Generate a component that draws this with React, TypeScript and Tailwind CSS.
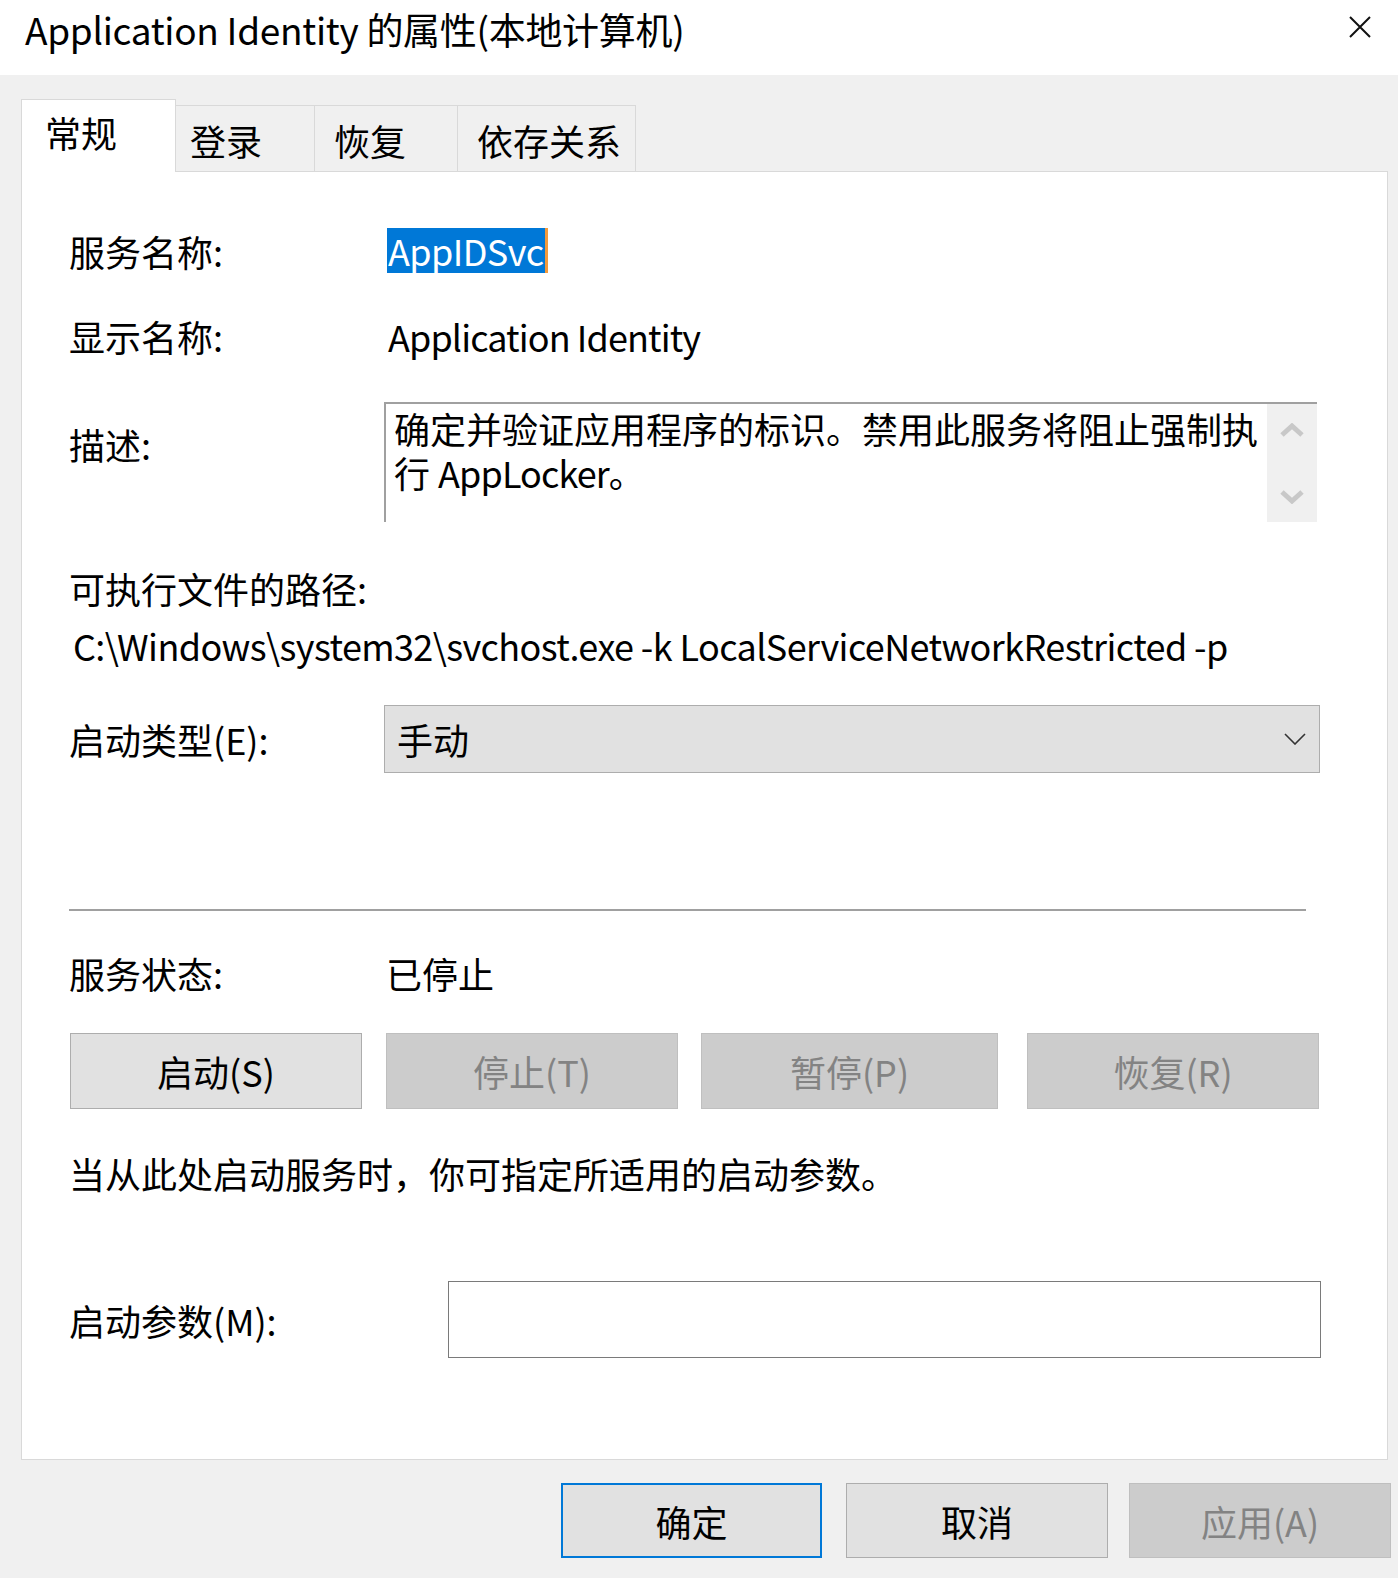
import React from "react";

const font = {
  fontFamily: '"Noto Sans CJK SC", "Noto Sans", sans-serif',
};

type Tab = { label: string; width: string; pad: string; active?: boolean };

const tabs: Tab[] = [
  { label: "常规", width: "w-[155px]", pad: "pl-[23px]", active: true },
  { label: "登录", width: "w-[139px]", pad: "pl-[14px]" },
  { label: "恢复", width: "w-[143px]", pad: "pl-[19px]" },
  { label: "依存关系", width: "w-[178px]", pad: "pl-[19px]" },
];

function CloseIcon() {
  return (
    <svg width="22" height="22" viewBox="0 0 22 22" className="block">
      <path d="M1 1 L21 21 M21 1 L1 21" stroke="#111" strokeWidth="2" fill="none" />
    </svg>
  );
}

function Chevron({ up }: { up?: boolean }) {
  return (
    <svg width="24" height="14" viewBox="0 0 24 14" className="block">
      <path
        d={up ? "M2 12 L12 3 L22 12" : "M2 2 L12 11 L22 2"}
        stroke="#c8c8c8"
        strokeWidth="5"
        fill="none"
      />
    </svg>
  );
}

function DropArrow() {
  return (
    <svg width="22" height="12" viewBox="0 0 22 12" className="block">
      <path d="M1 1 L11 11 L21 1" stroke="#333" strokeWidth="1.6" fill="none" />
    </svg>
  );
}

function Label({ children }: { children: React.ReactNode }) {
  return <div className="w-[315px] shrink-0 leading-[44px]">{children}</div>;
}

export default function App() {
  return (
    <div
      className="w-[1398px] h-[1578px] bg-[#f0f0f0] text-black overflow-hidden"
      style={font}
    >
      {/* title bar */}
      <div className="h-[75px] bg-white flex items-start justify-between pl-[25px] pr-[27px]">
        <div className="pt-[7px] text-[37px] leading-[44px] tracking-[-0.3px] whitespace-nowrap">
          Application Identity 的属性(本地计算机)
        </div>
        <div className="pt-[16px]">
          <CloseIcon />
        </div>
      </div>

      <div className="pl-[21px] pt-[24px]">
        {/* tabs */}
        <div className="flex items-end h-[72px]">
          {tabs.map((tab) =>
            tab.active ? (
              <div
                key={tab.label}
                className={`${tab.width} ${tab.pad} h-[73px] -mb-px relative z-10 bg-white border border-b-0 border-[#d9d9d9] text-[36px] leading-[44px] pt-[10px]`}
              >
                {tab.label}
              </div>
            ) : (
              <div
                key={tab.label}
                className={`${tab.width} ${tab.pad} h-[66px] border-t border-r border-[#d9d9d9] text-[36px] leading-[44px] pt-[12px]`}
              >
                {tab.label}
              </div>
            )
          )}
        </div>

        {/* panel */}
        <div className="w-[1367px] h-[1289px] bg-white border border-[#d9d9d9] pl-[47px] pt-[56px] text-[36px]">
          <div className="flex h-[45px] items-center">
            <Label>服务名称:</Label>
            <div className="flex h-[45px] ml-[3px]">
              <span className="bg-[#0078d7] text-white leading-[45px] pl-px pr-[2px] tracking-[-0.6px]">AppIDSvc</span>
              <span className="w-[3px] bg-[#f39a3c]" />
            </div>
          </div>

          <div className="flex mt-[41px] h-[44px]">
            <Label>显示名称:</Label>
            <div className="leading-[44px] ml-[4px] tracking-[-0.9px]">Application Identity</div>
          </div>

          <div className="flex mt-[44px]">
            <div className="w-[315px] shrink-0 pt-[20px] leading-[44px]">描述:</div>
            <div className="w-[933px] h-[120px] border-t-2 border-l-2 border-[#a0a0a0] flex">
              <div className="flex-1 pl-[8px] pt-[2px] leading-[44px]">
                确定并验证应用程序的标识。禁用此服务将阻止强制执
                <br />行 <span className="tracking-[-0.9px]">AppLocker</span>。
              </div>
              <div className="w-[50px] h-[118px] bg-[#f0f0f0] flex flex-col items-center justify-between pt-[19px] pb-[18px]">
                <Chevron up />
                <Chevron />
              </div>
            </div>
          </div>

          <div className="mt-[44px] leading-[44px]">可执行文件的路径:</div>
          <div className="mt-[13px] leading-[44px] pl-[4px] whitespace-nowrap tracking-[-0.6px]">
            C:\Windows\system32\svchost.exe -k LocalServiceNetworkRestricted -p
          </div>

          <div className="flex items-center mt-[38px]">
            <Label>启动类型(E):</Label>
            <div className="w-[936px] h-[68px] bg-[#e1e1e1] border border-[#adadad] flex items-center justify-between pl-[12px] pr-[13px]">
              <span className="leading-[44px]">手动</span>
              <DropArrow />
            </div>
          </div>

          <div className="mt-[136px] w-[1237px] h-[2px] bg-[#a0a0a0]" />

          <div className="flex mt-[40px] h-[44px]">
            <Label>服务状态:</Label>
            <div className="leading-[44px] ml-[2px]">已停止</div>
          </div>

          <div className="flex mt-[38px] h-[76px]">
            <button className="ml-px w-[292px] h-[76px] bg-[#e1e1e1] border border-[#adadad] text-[36px] leading-[44px]">
              启动(S)
            </button>
            <button className="ml-[24px] w-[292px] h-[76px] bg-[#cccccc] border border-[#bfbfbf] text-[#838383] text-[36px] leading-[44px]">
              停止(T)
            </button>
            <button className="ml-[23px] w-[297px] h-[76px] bg-[#cccccc] border border-[#bfbfbf] text-[#838383] text-[36px] leading-[44px]">
              暂停(P)
            </button>
            <button className="ml-[29px] w-[292px] h-[76px] bg-[#cccccc] border border-[#bfbfbf] text-[#838383] text-[36px] leading-[44px]">
              恢复(R)
            </button>
          </div>

          <div className="mt-[42px] leading-[44px]">
            当从此处启动服务时，你可指定所适用的启动参数。
          </div>

          <div className="flex items-center mt-[86px]">
            <div className="w-[379px] shrink-0 leading-[44px]">启动参数(M):</div>
            <div className="w-[873px] h-[77px] bg-white border border-[#7a7a7a]" />
          </div>
        </div>

        {/* dialog buttons */}
        <div className="flex justify-end pr-[7px] pt-[23px] text-[36px]">
          <button className="w-[261px] h-[75px] bg-[#e1e1e1] border-2 border-[#0078d7] leading-[44px]">
            确定
          </button>
          <button className="ml-[24px] w-[262px] h-[75px] bg-[#e1e1e1] border border-[#adadad] leading-[44px]">
            取消
          </button>
          <button className="ml-[21px] w-[262px] h-[75px] bg-[#cccccc] border border-[#bfbfbf] text-[#838383] leading-[44px]">
            应用(A)
          </button>
        </div>
      </div>
    </div>
  );
}
